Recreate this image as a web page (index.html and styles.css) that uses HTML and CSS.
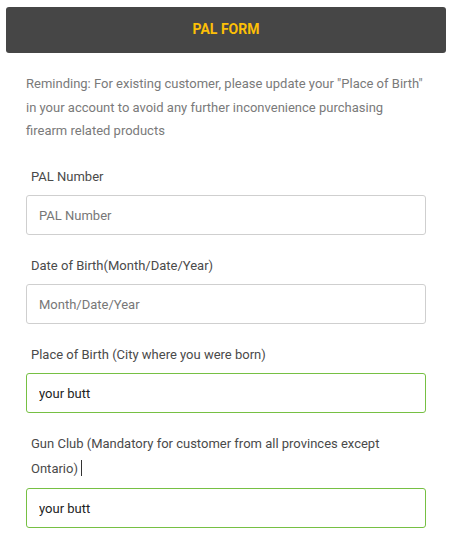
FILE: index.html
```html
<!DOCTYPE html>
<html lang="en">
<head>
    <meta charset="UTF-8">
    <meta name="viewport" content="width=device-width, initial-scale=1.0">
    <title>PAL Form</title>
    <link rel="stylesheet" href="styles.css">
</head>
<body>
    <div class="pal-header">PAL FORM</div>

    <p class="reminder">Reminding: For existing customer, please update your "Place of Birth" in your account to avoid any further inconvenience purchasing firearm related products</p>

    <form class="pal-form">
        <label class="field-label first">PAL Number</label>
        <input class="field" placeholder="PAL Number">

        <label class="field-label">Date of Birth(Month/Date/Year)</label>
        <input class="field" placeholder="Month/Date/Year">

        <label class="field-label">Place of Birth (City where you were born)</label>
        <input class="field valid" value="your butt">

        <label class="field-label long">Gun Club (Mandatory for customer from all provinces except Ontario) <span class="caret"></span></label>
        <input class="field valid" value="your butt">
    </form>
</body>
</html>
```

FILE: styles.css
```css
body {
    margin: 0;
    background: #fff;
    font-family: 'Roboto', 'Liberation Sans', sans-serif;
}
.pal-header {
    margin: 7px 7px 0 6px;
    height: 46px;
    line-height: 45px;
    background-color: #464646;
    border-radius: 3px;
    color: #fcbf07;
    font-size: 14px;
    font-weight: bold;
    text-align: center;
}
.reminder {
    margin: 19px 28px 0 26px;
    font-size: 13px;
    line-height: 23.5px;
    color: #7a7a7a;
}
.pal-form {
    display: flex;
    flex-direction: column;
    padding: 0 27px 0 26px;
}
.field-label {
    display: block;
    margin: 18px 0 6px;
    padding-left: 5px;
    padding-right: 30px;
    font-size: 13px;
    line-height: 25px;
    color: #4a4a4a;
}
.field-label.first {
    margin-top: 21px;
}
.field-label.long {
    margin-bottom: 7px;
}
.caret {
    display: inline-block;
    width: 1px;
    height: 16px;
    background: #333;
    vertical-align: -3px;
}
.field {
    box-sizing: border-box;
    height: 40px;
    width: 100%;
    margin: 0;
    padding: 1px 12px 0;
    border: 1px solid #cfcfcf;
    border-radius: 3px;
    font-family: 'Roboto', 'Liberation Sans', sans-serif;
    font-size: 13px;
    color: #222;
    outline: none;
}
.field::placeholder {
    color: #777;
}
.field.valid {
    border-color: #76c043;
}
```
